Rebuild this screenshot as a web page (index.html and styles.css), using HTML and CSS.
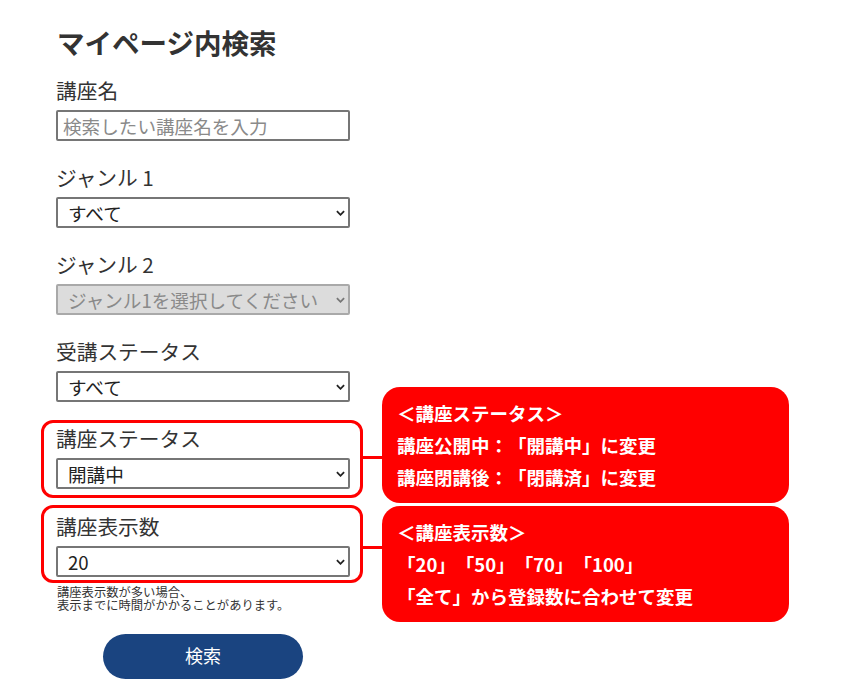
FILE: index.html
```html
<!DOCTYPE html>
<html lang="ja">
<head>
<meta charset="utf-8">
<title>マイページ内検索</title>
<link rel="stylesheet" href="styles.css">
</head>
<body>
<main class="page">
  <h1 class="title">マイページ内検索</h1>
  <form class="form">
    <div class="field">
      <label class="label" for="f-name">講座名</label>
      <input class="input" id="f-name" type="text" placeholder="検索したい講座名を入力">
    </div>
    <div class="field">
      <label class="label" for="f-g1">ジャンル 1</label>
      <div class="select-wrap">
        <select class="select" id="f-g1"><option>すべて</option></select>
        <svg class="chev" viewBox="0 0 10 6"><path d="M1 1 L5 5 L9 1" fill="none" stroke="#222" stroke-width="2"/></svg>
      </div>
    </div>
    <div class="field">
      <label class="label" for="f-g2">ジャンル 2</label>
      <div class="select-wrap">
        <select class="select" id="f-g2" disabled><option>ジャンル1を選択してください</option></select>
        <svg class="chev" viewBox="0 0 10 6"><path d="M1 1 L5 5 L9 1" fill="none" stroke="#777" stroke-width="2"/></svg>
      </div>
    </div>
    <div class="field">
      <label class="label" for="f-st">受講ステータス</label>
      <div class="select-wrap">
        <select class="select" id="f-st"><option>すべて</option></select>
        <svg class="chev" viewBox="0 0 10 6"><path d="M1 1 L5 5 L9 1" fill="none" stroke="#222" stroke-width="2"/></svg>
      </div>
    </div>
    <div class="field hl hl-status">
      <label class="label" for="f-cs">講座ステータス</label>
      <div class="select-wrap">
        <select class="select" id="f-cs"><option>開講中</option></select>
        <svg class="chev" viewBox="0 0 10 6"><path d="M1 1 L5 5 L9 1" fill="none" stroke="#222" stroke-width="2"/></svg>
      </div>
      <span class="connector"></span>
      <div class="callout">
        <p>＜講座ステータス＞</p>
        <p>講座公開中：「開講中」に変更</p>
        <p>講座閉講後：「閉講済」に変更</p>
      </div>
    </div>
    <div class="field hl hl-count">
      <label class="label" for="f-cnt">講座表示数</label>
      <div class="select-wrap">
        <select class="select" id="f-cnt"><option>20</option></select>
        <svg class="chev" viewBox="0 0 10 6"><path d="M1 1 L5 5 L9 1" fill="none" stroke="#222" stroke-width="2"/></svg>
      </div>
      <span class="connector"></span>
      <div class="callout">
        <p>＜講座表示数＞</p>
        <p>「20」「50」「70」「100」</p>
        <p>「全て」から登録数に合わせて変更</p>
      </div>
    </div>
    <p class="note">講座表示数が多い場合、<br>表示までに時間がかかることがあります。</p>
    <button class="btn" type="button">検索</button>
  </form>
</main>
</body>
</html>
```
FILE: styles.css
```css
body {
  margin: 0;
  background: #fff;
  color: #333;
  font-family: "Noto Sans CJK JP", "Noto Sans", sans-serif;
  text-spacing-trim: space-all;
}

.page {
  padding: 24px 0 0 41px;
}

.title {
  margin: 0 0 15px;
  padding-left: 16px;
  font-size: 27.5px;
  line-height: 36px;
  font-weight: 700;
  color: #333;
}

.form {
  display: flex;
  flex-direction: column;
  align-items: flex-start;
}

.field {
  display: flex;
  flex-direction: column;
  gap: 5px;
  padding-left: 15px;
  margin-top: 21px;
}

.field:first-child {
  margin-top: 0;
}

.label {
  font-size: 20.7px;
  line-height: 30px;
  color: #333;
  white-space: nowrap;
}

.input,
.select {
  width: 294px;
  height: 31px;
  box-sizing: border-box;
  border: 2px solid #767676;
  border-radius: 2px;
  font-family: inherit;
  font-size: 18.6px;
  color: #222;
  background: #fff;
  margin: 0;
}

.input {
  padding: 0 5px;
}

.input::placeholder {
  color: #8a8a8a;
}

.select {
  appearance: none;
  -webkit-appearance: none;
  padding: 0 22px 0 10px;
}

.select:disabled {
  background: #dcdcdc;
  border-color: #a9a9a9;
  color: #8a8a8a;
  opacity: 1;
}

.select-wrap {
  position: relative;
  width: 294px;
  height: 31px;
}

.chev {
  position: absolute;
  right: 5px;
  top: 13px;
  width: 9px;
  height: 6px;
  pointer-events: none;
}

.hl {
  position: relative;
  width: 294px;
  border: 3px solid #f00;
  border-radius: 12px;
}

.hl-status {
  margin-top: 18px;
  padding: 0 10px 6px 12px;
}

.hl-count {
  margin-top: 7px;
  padding: 3px 10px 3px 12px;
}

.connector {
  position: absolute;
  left: 319px;
  width: 19px;
  height: 3px;
  background: #f00;
}

.hl-status .connector {
  top: 33px;
}

.hl-count .connector {
  top: 38px;
}

.callout {
  position: absolute;
  left: 338px;
  width: 407px;
  height: 116px;
  box-sizing: border-box;
  padding: 10px 15px;
  background: #f00;
  border-radius: 18px;
  color: #fff;
  font-weight: 700;
  font-size: 18.5px;
  line-height: 32px;
}

.callout p {
  margin: 0;
  white-space: nowrap;
}

.hl-status .callout {
  top: -36px;
}

.hl-count .callout {
  top: -2px;
}

.note {
  margin: 3px 0 0;
  padding-left: 16px;
  font-size: 12.3px;
  line-height: 13px;
  color: #333;
}

.btn {
  margin: 22px 0 0 62px;
  width: 200px;
  height: 45px;
  border: none;
  border-radius: 23px;
  background: #1a4480;
  color: #fff;
  font-family: inherit;
  font-size: 18px;
  padding: 0 0 4px;
}
```
